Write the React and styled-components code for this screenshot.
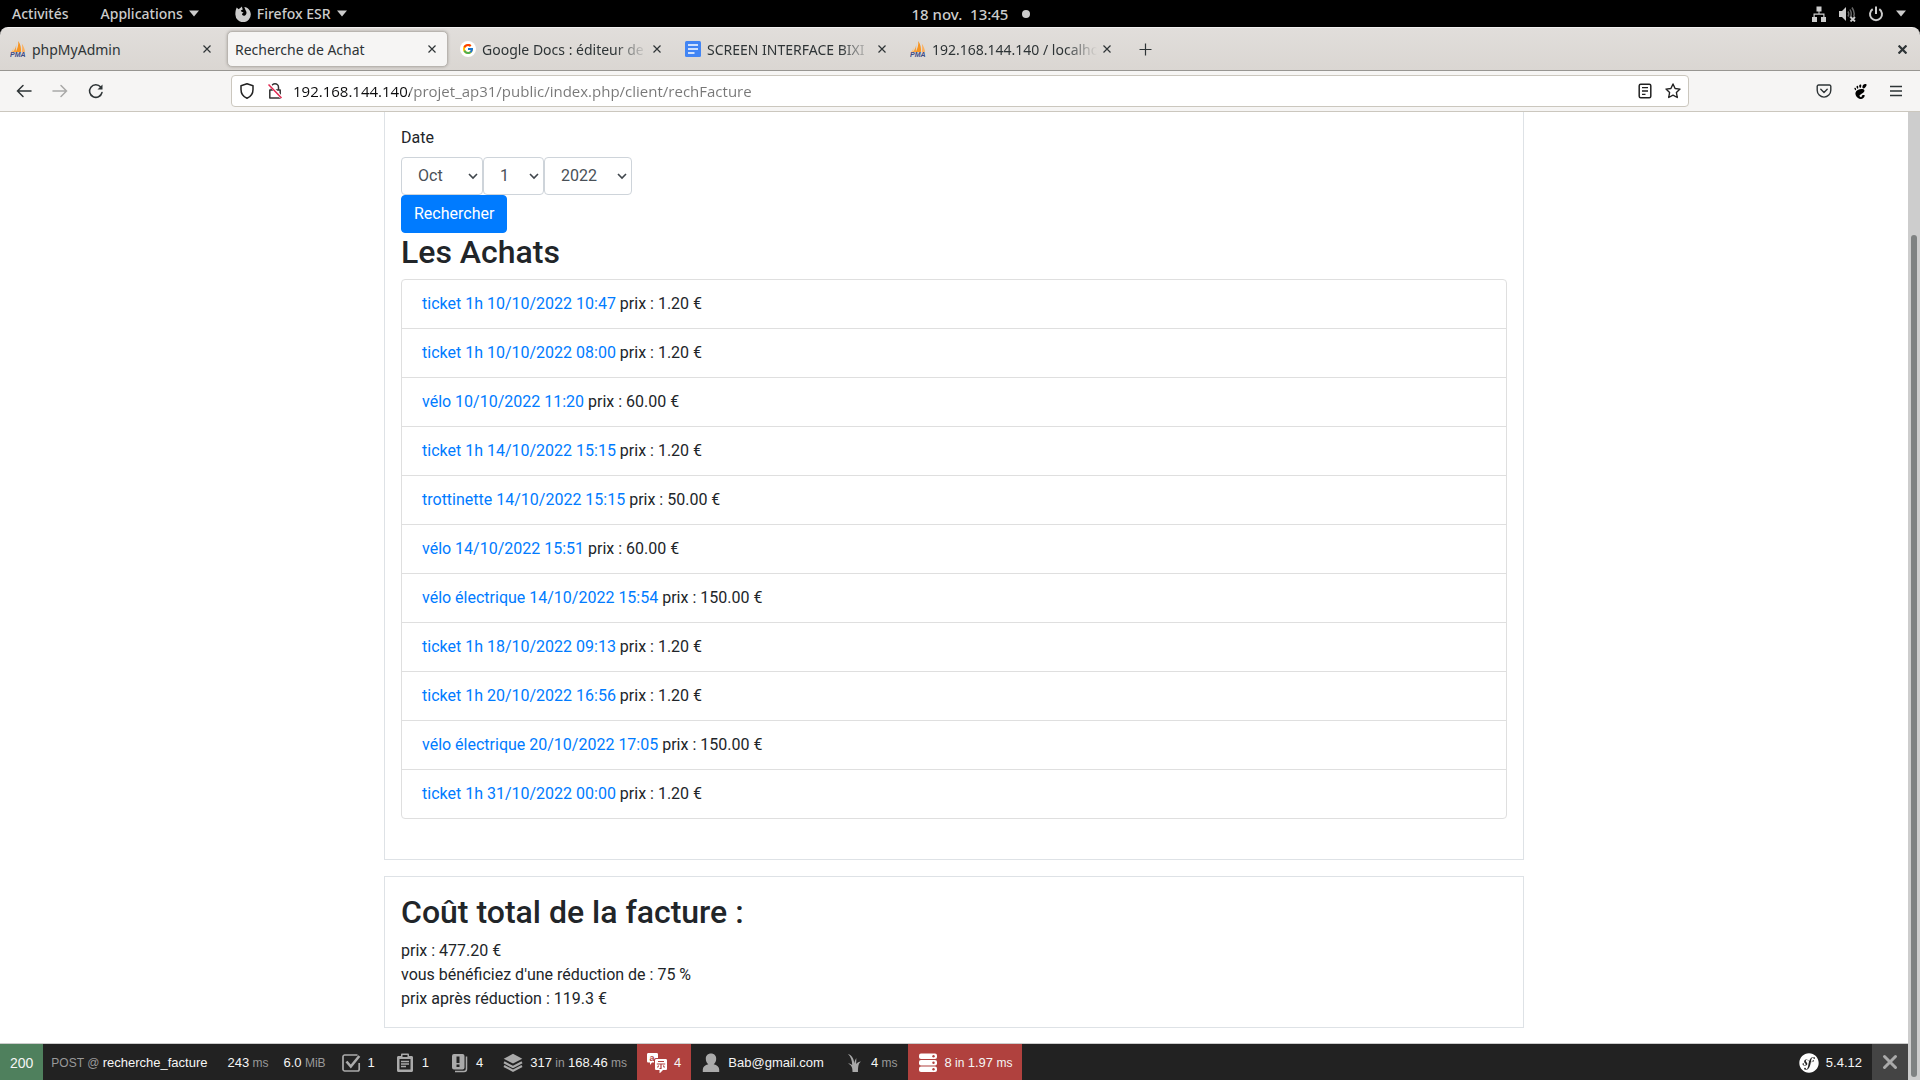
import React, { useState } from 'react'
import styled, { createGlobalStyle, css } from 'styled-components'
import { FcGoogle } from 'react-icons/fc'
import { FaSymfony } from 'react-icons/fa'
import { SiGnome } from 'react-icons/si'

const GlobalStyle = createGlobalStyle`
  * {
    box-sizing: border-box;
  }
  body {
    margin: 0;
    background: #000;
    font-family: Roboto, "Liberation Sans", sans-serif;
    font-size: 16px;
    line-height: 24px;
    color: #212529;
  }
  svg {
    display: block;
    flex: none;
  }
  button, input, select {
    font: inherit;
  }
`;
const Desktop = styled.div`
  height: 100vh;
  display: flex;
  flex-direction: column;
`;

/* gnome top bar */
const TopBar = styled.header`
  height: 27px;
  flex: none;
  display: grid;
  grid-template-columns: 1fr auto 1fr;
  align-items: center;
  padding: 0 14px 0 12px;
  background: #000;
  color: #ccc;
  font-family: "Noto Sans", "Open Sans", sans-serif;
  font-size: 14px;
  font-weight: 500;
  line-height: 20px;
`;
const Menus = styled.nav`
  display: flex;
  align-items: center;
  gap: 32px;
`;
const MenuButton = styled.button`
  display: flex;
  align-items: center;
  gap: 6px;
  padding: 0;
  border: none;
  background: none;
  color: inherit;
  line-height: 20px;
`;
const AppButton = styled(MenuButton)`
  margin-left: 4px;
`;
const Clock = styled.div`
  display: flex;
  align-items: center;
  gap: 14px;
  padding-left: 24px;
  font-size: 15px;
  white-space: pre;
`;
const Dot = styled.span`
  width: 8px;
  height: 8px;
  border-radius: 50%;
  background: #ccc;
`;
const Tray = styled.div`
  display: flex;
  align-items: center;
  justify-content: flex-end;
  gap: 12px;
`;

/* tabs */
const TabBar = styled.div`
  height: 44px;
  flex: none;
  display: flex;
  align-items: stretch;
  border-top: 1px solid #f3f1f0;
  border-bottom: 1px solid #989692;
  border-radius: 8px 8px 0 0;
  background: linear-gradient(#e1dedb, #dad6d2);
  color: #2e3436;
  font-family: "Noto Sans", "Open Sans", sans-serif;
  font-size: 14px;
  line-height: 20px;
`;
const Tab = styled.div`
  width: 225px;
  display: flex;
  align-items: center;
  gap: 6px;
  padding: 0 8px 0 10px;
  ${({ $active }) => $active && css`
    width: 221px;
    margin: 3px 2px;
    padding: 0 5px 0 7px;
    background: #f6f5f4;
    border: 1px solid #b9b5b0;
    border-radius: 5px;
    box-shadow: 0 0 3px #a9a5a0;
  `}
`;
const TabTitle = styled.span`
  flex: 1;
  min-width: 0;
  overflow: hidden;
  white-space: nowrap;
  margin-right: -6px;
  padding-top: 2px;
  mask-image: ${({ $fade }) => $fade ? 'linear-gradient(to left, transparent, #000 32px)' : 'none'};
`;
const TabClose = styled.button`
  width: 20px;
  height: 20px;
  display: flex;
  align-items: center;
  justify-content: center;
  padding: 0;
  border: none;
  background: none;
  color: inherit;
`;
const NewTab = styled(TabClose)`
  width: 40px;
  height: auto;
`;
const WindowClose = styled(NewTab)`
  width: 36px;
  margin-left: auto;
`;

/* address bar */
const NavBar = styled.div`
  height: 41px;
  flex: none;
  display: grid;
  grid-template-columns: 231px 1fr 231px;
  align-items: center;
  border-bottom: 1px solid #cbc7be;
  background: #f6f5f4;
  color: #2e3436;
`;
const NavGroup = styled.div`
  display: flex;
  justify-content: ${({ $end }) => $end ? 'flex-end' : 'flex-start'};
  padding: 0 6px;
`;
const NavButton = styled.button`
  width: ${({ $small }) => $small ? 28 : 36}px;
  height: 28px;
  display: flex;
  align-items: center;
  justify-content: center;
  padding: 0;
  border: none;
  background: none;
  color: ${({ disabled }) => disabled ? '#a9a9a8' : '#2e3436'};
`;
const UrlBox = styled.form`
  height: 32px;
  display: flex;
  align-items: center;
  padding: 0 1px;
  background: #fff;
  border: 1px solid #cbc7be;
  border-radius: 4px;
`;
/* host part in black, the path in grey */
const UrlInput = styled.input`
  flex: 1;
  min-width: 0;
  height: 28px;
  padding: 0 4px;
  border: none;
  outline: none;
  font-family: "Open Sans", "Noto Sans", sans-serif;
  font-size: 15px;
  background: linear-gradient(to right, #0c0c0d 121px, #777 121px);
  background-clip: text;
  -webkit-background-clip: text;
  -webkit-text-fill-color: transparent;
`;

/* page */
const Viewport = styled.div`
  flex: 1;
  min-height: 0;
  display: flex;
  background: #fff;
`;
const PageColumn = styled.div`
  flex: 1;
  min-width: 0;
  display: flex;
  flex-direction: column;
`;
const Page = styled.main`
  flex: 1;
  min-height: 0;
  overflow: hidden;
`;
const Container = styled.div`
  max-width: 1140px;
  margin: 0 auto;
  display: flex;
  flex-direction: column;
  gap: 16px;
`;
const Card = styled.section`
  padding: 16px;
  border: 1px solid #dee2e6;
  ${({ $scrolled }) => $scrolled && css`
    border-top: none;
    padding: 14px 16px 40px;
  `}
`;
const Legend = styled.label`
  display: block;
  margin-bottom: 7px;
`;
const DateRow = styled.div`
  display: flex;
`;
const SelectWrap = styled.span`
  position: relative;
  svg {
    position: absolute;
    right: 5px;
    top: 16px;
    pointer-events: none;
  }
`;
const Select = styled.select`
  appearance: none;
  display: block;
  width: ${({ $width }) => $width}px;
  height: 38px;
  padding: 6px 16px;
  color: #495057;
  background: #fff;
  border: 1px solid #ced4da;
  border-radius: 4px;
`;
const SubmitButton = styled.button`
  display: block;
  height: 38px;
  padding: 6px 12px;
  color: #fff;
  background: #007bff;
  border: 1px solid #007bff;
  border-radius: 4px;
`;
const Title = styled.h2`
  margin: 0 0 8px;
  font-size: 32px;
  font-weight: 500;
  line-height: 38px;
`;
const List = styled.ul`
  margin: 0;
  padding: 0;
  list-style: none;
  border: 1px solid #dfdfdf;
  border-radius: 4px;
`;
const Item = styled.li`
  padding: 12px 20px;
  & + & {
    border-top: 1px solid #dfdfdf;
  }
`;
const Link = styled.a`
  color: #007bff;
  text-decoration: none;
`;
const ScrollTrack = styled.div`
  width: 12px;
  display: flex;
  flex-direction: column;
  padding: 123px 3px 3px;
  background: #cdcdcd;
`;
const ScrollThumb = styled.div`
  flex: 1;
  border-radius: 3px;
  background: #7f8282;
`;

/* symfony debug toolbar */
const DebugBar = styled.footer`
  height: 37px;
  flex: none;
  display: flex;
  border-top: 1px solid #ccc;
  background: #222;
  color: #f5f5f5;
  font-family: "Liberation Sans", Arial, sans-serif;
  font-size: 13px;
  line-height: 20px;
  white-space: pre;
`;
const Block = styled.div`
  display: flex;
  align-items: center;
  gap: 7px;
  padding: 2px 10px 0;
  svg {
    color: ${({ $red }) => $red ? '#fff' : '#aaa'};
  }
  background: ${({ $red }) => $red ? '#b0413e' : 'transparent'};
`;
const Status = styled(Block)`
  font-size: 14px;
  background: #4f805d;
`;
const RouteBlock = styled(Block)`
  padding-left: 8px;
`;
const MemoryBlock = styled(Block)`
  padding: 2px 5px 0;
`;
const VersionBlock = styled(Block)`
  margin-left: auto;
  svg {
    color: #fff;
  }
`;
const Muted = styled.span`
  color: ${({ $bright }) => $bright ? 'inherit' : '#999'};
  font-size: 12px;
`;
const HideButton = styled.button`
  width: 36px;
  display: flex;
  align-items: center;
  justify-content: center;
  padding: 0;
  border: none;
  background: #444;
  color: #aaa;
`;

const Caret = () => (
  <svg width="10" height="7" viewBox="0 0 10 7"><path d="M0 0.500h10L5 6.500z" fill="#ccc" /></svg>
)
const Cross = ({ size = 8, width = 1.2 }) => (
  <svg width={size} height={size} viewBox="0 0 8 8" fill="none" stroke="currentColor" strokeWidth={width}>
    <path d="M.5.5l7 7M7.500.500l-7 7" />
  </svg>
)
const Chevron = () => (
  <svg width="10" height="7" viewBox="0 0 10 7" fill="none" stroke="#40464c" strokeWidth="1.600">
    <path d="M1 1l4 4 4-4" />
  </svg>
)
const FirefoxIcon = () => (
  <svg width="16" height="16" viewBox="0 0 16 16">
    <path d="M1.800 1.500L3.500 3.300C4.500 2.300 6 1.500 7 .500c0 1.200.300 2 1 2.700L5.800 4.500l1 1.500 2 .300-1.600 1.500C7 9.500 8.500 10.300 10 9.500c1.800-.900 2-3.500.500-5.500L9.300 1c3.800.500 6.500 3.500 6.500 7.300a7.600 7.600 0 0 1-15.400.400C.200 6 .800 3.500 1.800 1.500z" fill="#ccc" />
    <path d="M8.800 6.200c1 1-.300 2-1.500 2.200" stroke="#000" fill="none" />
  </svg>
)
const PmaIcon = () => (
  <svg width="16" height="16" viewBox="0 0 16 16">
    <path d="M6.300 1.500C6.500 5 5 9 2.600 11H6z" fill="#f9a13a" />
    <path d="M8.300 0c2.400 3.500 3 7.500 2.600 11H5.800C7.500 7.500 8.600 4 8.300 0z" fill="#f79420" />
    <path d="M11.800 2.500c1.900 3 3.200 6 3.200 8.500h-3.200c.5-3 .5-5.500 0-8.500z" fill="#fbb060" />
    <path d="M3.600 5C3.500 7.500 2.500 9.600 1 11h2.200z" fill="#fbc27d" />
    <text x="0" y="16" fontSize="7" fontWeight="700" fontStyle="italic" fontFamily="Liberation Sans, sans-serif" fill="#3d4a85">PMA</text>
  </svg>
)
const GoogleIcon = () => (
  <svg width="16" height="16" viewBox="0 0 16 16">
    <circle cx="8" cy="8" r="8" fill="#fff" />
    <FcGoogle x="2" y="2" size={12} />
  </svg>
)
const DocsIcon = () => (
  <svg width="16" height="16" viewBox="0 0 16 16">
    <rect width="16" height="16" rx="1.500" fill="#4285f4" />
    <path d="M3 4h10M3 8h10M3 12h6.500" stroke="#fff" strokeWidth="1.700" />
  </svg>
)

const tabs = [
  { title: 'phpMyAdmin', icon: <PmaIcon /> },
  { title: 'Recherche de Achat', active: true },
  { title: 'Google Docs : éditeur de d', icon: <GoogleIcon />, fade: true },
  { title: 'SCREEN INTERFACE BIXI', icon: <DocsIcon />, fade: true },
  { title: '192.168.144.140 / localho', icon: <PmaIcon />, fade: true },
]

const achats = [
  { nom: 'ticket 1h 10/10/2022 10:47', prix: '1.20' },
  { nom: 'ticket 1h 10/10/2022 08:00', prix: '1.20' },
  { nom: 'vélo 10/10/2022 11:20', prix: '60.00' },
  { nom: 'ticket 1h 14/10/2022 15:15', prix: '1.20' },
  { nom: 'trottinette 14/10/2022 15:15', prix: '50.00' },
  { nom: 'vélo 14/10/2022 15:51', prix: '60.00' },
  { nom: 'vélo électrique 14/10/2022 15:54', prix: '150.00' },
  { nom: 'ticket 1h 18/10/2022 09:13', prix: '1.20' },
  { nom: 'ticket 1h 20/10/2022 16:56', prix: '1.20' },
  { nom: 'vélo électrique 20/10/2022 17:05', prix: '150.00' },
  { nom: 'ticket 1h 31/10/2022 00:00', prix: '1.20' },
]

const GnomeBar = () => (
  <TopBar>
    <Menus>
      <MenuButton>Activités</MenuButton>
      <MenuButton>Applications <Caret /></MenuButton>
      <AppButton><FirefoxIcon /> Firefox ESR <Caret /></AppButton>
    </Menus>
    <Clock>{'18 nov.  13:45'}<Dot /></Clock>
    <Tray>
      <svg width="16" height="16" viewBox="0 0 16 16" fill="#ccc">
        <path d="M5.500 0.500h5v5h-2v2h5v3.500H15V16h-5v-5h2.300V8.700H3.700V11H6v5H1v-5h1.500V7.500h5v-2h-2z" />
      </svg>
      <svg width="17" height="16" viewBox="0 0 17 16" fill="none">
        <path d="M0 5h3l4-4v14l-4-4H0z" fill="#ccc" />
        <path d="M9 5.500q1.500 2.500 0 5M11 3.500q2.500 4.500 0 8.500M13 1.500q3.500 5.500 1.500 9" stroke="#666" strokeWidth="1.500" />
        <path d="M11.500 11l4.500 4.500M16 11l-4.500 4.500" stroke="#ccc" strokeWidth="1.800" />
      </svg>
      <svg width="16" height="16" viewBox="0 0 16 16" fill="none" stroke="#ccc" strokeWidth="2">
        <path d="M8 0.500v7.500M4.700 3.200a6 6 0 1 0 6.600 0" />
      </svg>
      <Caret />
    </Tray>
  </TopBar>
)

const Browser = () => {
  const [url, setUrl] = useState('192.168.144.140/projet_ap31/public/index.php/client/rechFacture')
  return (
    <>
      <TabBar>
        {tabs.map((t) => (
          <Tab key={t.title} $active={t.active}>
            {t.icon}
            <TabTitle $fade={t.fade}>{t.title}</TabTitle>
            <TabClose aria-label="Fermer l'onglet"><Cross /></TabClose>
          </Tab>
        ))}
        <NewTab aria-label="Nouvel onglet">
          <svg width="13" height="13" viewBox="0 0 13 13" stroke="currentColor" strokeWidth="1.200"><path d="M6.500 0.500v12M0.500 6.500h12" /></svg>
        </NewTab>
        <WindowClose aria-label="Fermer"><Cross size={9} width={2} /></WindowClose>
      </TabBar>
      <NavBar>
        <NavGroup>
          <NavButton aria-label="Précédent">
            <svg width="16" height="16" viewBox="0 0 16 16" fill="none" stroke="currentColor" strokeWidth="1.500" strokeLinecap="round"><path d="M15 8H1.500M7 2.500L1.500 8 7 13.500" /></svg>
          </NavButton>
          <NavButton aria-label="Suivant" disabled>
            <svg width="16" height="16" viewBox="0 0 16 16" fill="none" stroke="currentColor" strokeWidth="1.500" strokeLinecap="round"><path d="M1 8h13.500M9 2.500L14.500 8 9 13.500" /></svg>
          </NavButton>
          <NavButton aria-label="Actualiser">
            <svg width="16" height="16" viewBox="0 0 16 16" fill="none" stroke="currentColor" strokeWidth="1.500" strokeLinecap="round">
              <path d="M14 9.500A6.300 6.300 0 1 1 12.700 4" />
              <path d="M9.500 6.500h5v-5z" fill="currentColor" stroke="none" />
            </svg>
          </NavButton>
        </NavGroup>
        <UrlBox onSubmit={(e) => e.preventDefault()}>
          <NavButton type="button" $small aria-label="Protection">
            <svg width="16" height="16" viewBox="0 0 16 16" fill="none" stroke="#222" strokeWidth="1.500" strokeLinejoin="round"><path d="M8 .8l6 2v3.600c0 4-2.300 7.200-6 8.800-3.700-1.600-6-4.800-6-8.800V2.800z" /></svg>
          </NavButton>
          <NavButton type="button" $small aria-label="Connexion non sécurisée">
            <svg width="16" height="16" viewBox="0 0 16 16" fill="none" stroke="#333" strokeWidth="1.500">
              <path d="M4.500 7V4.300a3.500 3.500 0 0 1 7 0V7M2.800 7h10.400v8H2.800z" strokeLinejoin="round" />
              <path d="M2.400 1.500l12 13" stroke="#fff" strokeWidth="3" />
              <path d="M1.500 1.500l13 13.500" stroke="#e22850" />
            </svg>
          </NavButton>
          <UrlInput aria-label="Adresse" value={url} onChange={(e) => setUrl(e.target.value)} />
          <NavButton type="button" $small aria-label="Mode lecture">
            <svg width="16" height="16" viewBox="0 0 16 16" fill="none" stroke="#222" strokeWidth="1.500"><rect x="2.200" y="1.200" width="11.600" height="13.600" rx="1.500" /><path d="M5 4.700h6M5 8h6M5 11.300h3.500" strokeWidth="1.300" /></svg>
          </NavButton>
          <NavButton type="button" $small aria-label="Marquer la page">
            <svg width="16" height="16" viewBox="0 0 16 16" fill="none" stroke="#222" strokeWidth="1.400" strokeLinejoin="round"><path d="M8 1l2.100 4.500 4.900.6-3.600 3.400.9 5L8 12.100 3.700 14.500l.9-5L1 6.100l4.900-.6z" /></svg>
          </NavButton>
        </UrlBox>
        <NavGroup $end>
          <NavButton aria-label="Pocket">
            <svg width="16" height="16" viewBox="0 0 16 16" fill="none" stroke="currentColor" strokeWidth="1.400" strokeLinecap="round" strokeLinejoin="round"><path d="M2.500 2h11a1.300 1.300 0 0 1 1.300 1.300v4a6.800 6.800 0 0 1-13.600 0v-4A1.300 1.300 0 0 1 2.500 2zM4.800 6.300L8 9.400l3.200-3.100" /></svg>
          </NavButton>
          <NavButton aria-label="GNOME"><SiGnome size={15} color="#000" /></NavButton>
          <NavButton aria-label="Menu">
            <svg width="14" height="12" viewBox="0 0 14 12" stroke="currentColor" strokeWidth="1.500"><path d="M1 1.500h12M1 6h12M1 10.500h12" /></svg>
          </NavButton>
        </NavGroup>
      </NavBar>
    </>
  )
}

const DateSelect = ({ id, width, value, label }) => (
  <SelectWrap>
    <Select id={id} $width={width} defaultValue={value} aria-label={label}>
      <option>{value}</option>
    </Select>
    <Chevron />
  </SelectWrap>
)

const Facture = () => (
  <Page>
    <Container>
      <Card $scrolled>
        <form onSubmit={(e) => e.preventDefault()}>
          <Legend htmlFor="mois">Date</Legend>
          <DateRow>
            <DateSelect id="mois" width={82} value="Oct" />
            <DateSelect id="jour" width={61} value="1" label="Jour" />
            <DateSelect id="annee" width={88} value="2022" label="Année" />
          </DateRow>
          <SubmitButton>Rechercher</SubmitButton>
        </form>
        <Title>Les Achats</Title>
        <List>
          {achats.map((a) => (
            <Item key={a.nom}>
              <Link href="#">{a.nom}</Link> prix : {a.prix} €
            </Item>
          ))}
        </List>
      </Card>
      <Card>
        <Title>Coût total de la facture :</Title>
        <div>prix : 477.20 €</div>
        <div>vous bénéficiez d'une réduction de : 75 %</div>
        <div>prix après réduction : 119.3 €</div>
      </Card>
    </Container>
  </Page>
)

const ToolIcon = ({ children }) => (
  <svg width="20" height="20" viewBox="0 0 20 20" fill="currentColor">{children}</svg>
)

const Toolbar = () => (
  <DebugBar>
    <Status>200</Status>
    <RouteBlock><span><Muted>POST @ </Muted>recherche_facture</span></RouteBlock>
    <Block><span>243<Muted> ms</Muted></span></Block>
    <MemoryBlock><span>6.0<Muted> MiB</Muted></span></MemoryBlock>
    <Block>
      <ToolIcon>
        <path d="M16.500 2H3.500A1.700 1.700 0 0 0 2 3.500v13A1.700 1.700 0 0 0 3.500 18h13a1.700 1.700 0 0 0 1.700-1.700V10" fill="none" stroke="currentColor" strokeWidth="1.700" />
        <path d="M5.500 8.500l4.300 5L18.300 3" fill="none" stroke="currentColor" strokeWidth="2.600" />
      </ToolIcon>
      1
    </Block>
    <Block>
      <ToolIcon>
        <path fillRule="evenodd" d="M3.500 3H6V1.500C6 1 6.500.500 7 .500h6c.500 0 1 .500 1 1V3h2.500c1 0 1.500.600 1.500 1.500v13c0 .900-.600 1.500-1.500 1.500h-13C2.600 19 2 18.400 2 17.500v-13C2 3.600 2.600 3 3.500 3zM7.500 2v2h5V2zM4.500 6v10.500h11V6z" />
        <path d="M6 8.500h8M6 11h8M6 13.500h5" stroke="currentColor" strokeWidth="1.400" />
      </ToolIcon>
      1
    </Block>
    <Block>
      <ToolIcon>
        <path fillRule="evenodd" d="M5 1h8.500a2 2 0 0 1 2 2v11.500a2 2 0 0 1-2 2H5a2 2 0 0 1-2-2V3a2 2 0 0 1 2-2zm2.500 2.500V10h3V3.500zm0 8V14h3v-2.500z" />
        <path d="M17.500 3.500V16a2.500 2.500 0 0 1-2.500 2.500H6" fill="none" stroke="currentColor" strokeWidth="1.500" />
      </ToolIcon>
      4
    </Block>
    <Block>
      <ToolIcon>
        <path d="M10 .8l9.300 5L10 10.600.700 5.800z" />
        <path d="M1 9.300l9 4.700 9-4.700M1 13l9 4.700 9-4.700" fill="none" stroke="currentColor" strokeWidth="2.200" />
      </ToolIcon>
      <span>317<Muted> in </Muted>168.46<Muted> ms</Muted></span>
    </Block>
    <Block $red>
      <ToolIcon>
        <path d="M1.500 0h8c1 0 1.500.500 1.500 1.500V5H9C7.500 5 7 6 7 7v2.500H5L3 12V9.500H1.500C.500 9.500 0 9 0 8V1.500C0 .500.500 0 1.500 0z" />
        <text x="2.500" y="7.500" fontSize="9" fontWeight="700" fill="#b0413e" fontFamily="Liberation Sans, sans-serif">a</text>
        <path d="M9.500 6h9c1 0 1.500.500 1.500 1.500v8c0 1-.500 1.500-1.500 1.500H16l-3.500 3.500V17h-3c-1 0-1.500-.500-1.500-1.500v-8C8 6.500 8.500 6 9.500 6z" />
        <path d="M11 8.500h6M9.800 11h8.400M14 11v4.500h-1.500M11.700 12.500l-1.200 2M16.300 12.500l1.200 2" fill="none" stroke="#b0413e" strokeWidth="1.200" />
      </ToolIcon>
      4
    </Block>
    <Block>
      <ToolIcon>
        <path d="M10 .5c3.200 0 5.200 2.200 5.200 5.200 0 2.300-1 4.300-2.500 5.500 3.300.800 5.500 2.500 5.500 5.300v2.500H1.800v-2.500c0-2.800 2.200-4.500 5.500-5.300C5.800 10 4.800 8 4.800 5.700 4.800 2.700 6.800.500 10 .500z" />
      </ToolIcon>
      Bab@gmail.com
    </Block>
    <Block>
      <ToolIcon>
        <path d="M4 1c3.800 1 6 5 6.300 9.500.400-2.500 1-4 2-5.500.200 2-.100 4-.200 6 1.200-1.500 2.900-2.500 4.900-2.500-2.500 1.500-3 5-3 10.500H8.500c0-4-.500-6.500-4.500-8.500 2 0 3.300.700 4.200 1.500C8 7.500 7 4 4 1z" />
      </ToolIcon>
      <span>4<Muted> ms</Muted></span>
    </Block>
    <Block $red>
      <ToolIcon>
        {[0.500, 7, 13.500].map((y) => (
          <g key={y}>
            <rect x="1" y={y} width="18" height="5.500" rx="2" />
            <circle cx="15.500" cy={y + 2.800} r="1.200" fill="#b0413e" />
          </g>
        ))}
      </ToolIcon>
      <span>8<Muted $bright> in </Muted>1.97<Muted $bright> ms</Muted></span>
    </Block>
    <VersionBlock>
      <FaSymfony size={20} />
      5.4.12
    </VersionBlock>
    <HideButton aria-label="Close Toolbar">
      <svg width="16" height="16" viewBox="0 0 16 16" stroke="currentColor" strokeWidth="3" strokeLinecap="round"><path d="M2.500 2.500l11 11M13.500 2.500l-11 11" /></svg>
    </HideButton>
  </DebugBar>
)

export default function App() {
  return (
    <Desktop>
      <GlobalStyle />
      <GnomeBar />
      <Browser />
      <Viewport>
        <PageColumn>
          <Facture />
          <Toolbar />
        </PageColumn>
        <ScrollTrack><ScrollThumb /></ScrollTrack>
      </Viewport>
    </Desktop>
  )
}
